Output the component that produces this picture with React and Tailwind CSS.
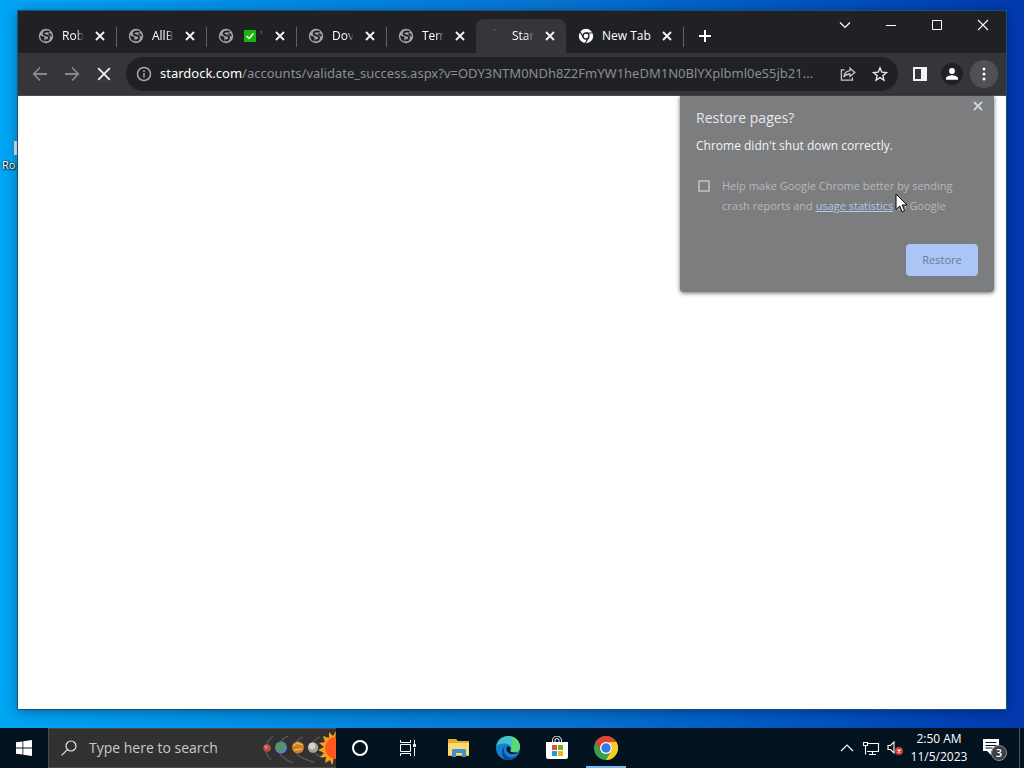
import { useState } from 'react';

const tabs = [
  { id: 1, title: 'Rob', icon: 'globe' },
  { id: 2, title: 'AllB', icon: 'globe' },
  { id: 3, title: "'", icon: 'globe', check: true },
  { id: 4, title: 'Dov', icon: 'globe' },
  { id: 5, title: 'Tem', icon: 'globe' },
  { id: 6, title: 'Star', icon: 'loading' },
  { id: 7, title: 'New Tab', icon: 'chrome' },
];

function Globe() {
  return (
    <svg viewBox="0 0 16 16" className="h-4 w-4 shrink-0">
      <circle cx="8" cy="8" r="7.2" fill="#a4a6a8" />
      <path d="M11.600 3.900C9.600 2.900 6.200 3.300 5.600 5C5.200 6.600 6.800 7.200 8.400 7.500C10.400 7.900 11.400 8.700 11 10.200C10.500 11.900 8.600 12.600 6.800 12.200" fill="none" stroke="#202124" strokeWidth="1.900" />
      <path d="M2.300 7.200C3.600 8.400 5.600 7.700 6.400 9.200C6.900 10.400 5.900 11.400 6.600 13.500C3.800 13 2 10.600 2.300 7.200Z" fill="#202124" />
      <path d="M10 5.600C11.400 5 12.600 5.400 13.400 6.400L13.700 8.400C12.400 8.600 11 7.600 10 5.600Z" fill="#202124" />
    </svg>
  );
}

function ChromeMono() {
  return (
    <svg viewBox="0 0 16 16" className="h-4 w-4 shrink-0" fill="none" stroke="#fff">
      <circle cx="8" cy="8" r="7.2" fill="#fff" stroke="none" />
      <circle cx="8" cy="8" r="3" stroke="#202124" strokeWidth="1.3" />
      <path d="M8 5h6.600M5.400 9.500 2.100 3.800M10.600 9.500 7.300 15.200" stroke="#202124" strokeWidth="1.200" />
    </svg>
  );
}

function CloseIcon({ className }) {
  return (
    <svg viewBox="0 0 16 16" className={className} fill="none" stroke="currentColor" strokeWidth="1.8">
      <path d="M4 4l8 8M12 4l-8 8" />
    </svg>
  );
}

function Tab({ tab, active, last, beforeActive, onSelect }) {
  return (
    <div className={`relative flex h-[34px] items-center gap-2 pr-2 pl-3 ${last ? 'w-[117px]' : 'w-[90px]'} ${active ? 'rounded-t-lg bg-[#35363a]' : ''}`}>
      {tab.icon === 'globe' && <Globe />}
      {tab.icon === 'chrome' && <ChromeMono />}
      {tab.icon === 'loading' && (
        <svg viewBox="0 0 16 16" className="h-4 w-4 shrink-0"><path d="M5 2h3" stroke="#4d5163" strokeWidth="1.5" /></svg>
      )}
      <button
        onClick={onSelect}
        className={`flex h-full min-w-0 flex-1 items-center text-left text-xs whitespace-nowrap text-white ${last ? '' : '[mask-image:linear-gradient(to_right,#000_65%,transparent)]'}`}
      >
        {tab.check && (
          <svg viewBox="0 0 12 12" className="mr-1 ml-0.5 h-3 w-3 shrink-0">
            <rect width="12" height="12" fill="#16b50f" />
            <path d="M2.500 6l2.500 2.500 4.500-5" fill="none" stroke="#fff" strokeWidth="1.400" />
          </svg>
        )}
        {tab.title}
      </button>
      <button aria-label="Close tab" className="text-gray-100"><CloseIcon className="h-4 w-4" /></button>
      {!active && !beforeActive && <span className="absolute top-2 -right-px h-5 w-px bg-[#5f6165]" />}
    </div>
  );
}

function TitleBar() {
  const [current, setCurrent] = useState(6);
  return (
    <div className="flex h-[42px] items-end bg-[#202124] pl-2">
      {tabs.map((tab) => (
        <Tab
          key={tab.id}
          tab={tab}
          active={tab.id === current}
          beforeActive={tab.id === current - 1 && current !== 6}
          last={tab.id === 7}
          onSelect={() => setCurrent(tab.id)}
        />
      ))}
      <button aria-label="New tab" className="flex h-[34px] w-11 items-center justify-center">
        <svg viewBox="0 0 14 14" className="h-3.5 w-3.5" stroke="#fff" strokeWidth="2"><path d="M7 1v12M1 7h12" /></svg>
      </button>
      <div className="ml-auto flex self-start">
        <button aria-label="Search tabs" className="flex h-7 w-[46px] items-center justify-center">
          <svg viewBox="0 0 12 12" className="h-3 w-3" fill="none" stroke="#fff" strokeWidth="1.200"><path d="M1 3.500l5 5 5-5" /></svg>
        </button>
        <button aria-label="Minimize" className="flex h-7 w-[46px] items-center justify-center">
          <svg viewBox="0 0 12 12" className="h-3 w-3" stroke="#fff"><path d="M1 6.500h10" /></svg>
        </button>
        <button aria-label="Maximize" className="flex h-7 w-[46px] items-center justify-center">
          <svg viewBox="0 0 12 12" className="h-3 w-3" fill="none" stroke="#fff"><path d="M1.500 1.500h9v9h-9z" /></svg>
        </button>
        <button aria-label="Close" className="flex h-7 w-[46px] items-center justify-center">
          <svg viewBox="0 0 12 12" className="h-3 w-3" stroke="#fff" strokeWidth="1.100"><path d="M1 1l10 10M11 1L1 11" /></svg>
        </button>
      </div>
    </div>
  );
}

function Toolbar() {
  return (
    <div className="flex h-[43px] items-center border-b border-[#4a4b4e] bg-[#35363a] px-1.5">
      <button aria-label="Back" className="flex h-8 w-8 items-center justify-center">
        <svg viewBox="0 0 16 16" className="h-4 w-4" fill="none" stroke="#87888b" strokeWidth="1.8"><path d="M15 8H2M8 1.500L1.800 8 8 14.500" /></svg>
      </button>
      <button aria-label="Forward" className="flex h-8 w-8 items-center justify-center">
        <svg viewBox="0 0 16 16" className="h-4 w-4" fill="none" stroke="#87888b" strokeWidth="1.8"><path d="M1 8h13M8 1.500L14.200 8 8 14.500" /></svg>
      </button>
      <button aria-label="Stop" className="flex h-8 w-8 items-center justify-center">
        <svg viewBox="0 0 16 16" className="h-4 w-4" stroke="#f1f1f2" strokeWidth="1.8"><path d="M2.200 2.200l11.600 11.600M13.800 2.200L2.200 13.800" /></svg>
      </button>
      <div className="mr-1.5 ml-1.5 flex h-[34px] min-w-0 flex-1 items-center rounded-full bg-[#202124] pr-0.5 pl-2.5">
        <svg viewBox="0 0 16 16" className="h-4 w-4 shrink-0" fill="none" stroke="#a5a8ac" strokeWidth="1.500">
          <circle cx="8" cy="8" r="6.500" /><path d="M8 7v4.500M8 4.300v1.600" />
        </svg>
        <p className="ml-2 min-w-0 flex-1 truncate font-['Noto_Sans',sans-serif] text-[13px] text-[#8b8e92]">
          <span className="text-white">stardock.com</span>/accounts/validate_success.aspx?v=ODY3NTM0NDh8Z2FmYW1heDM1N0BlYXplbml0eS5jb21...
        </p>
        <button aria-label="Share" className="flex h-8 w-8 shrink-0 items-center justify-center">
          <svg viewBox="0 0 16 16" className="h-4 w-4" fill="none" stroke="#c3c5c8" strokeWidth="1.300">
            <path d="M4.500 3.800H1.400v10.400h11v-2.600" /><path d="M10 2.200l4.800 4.200L10 10.400V8C7 8 5.200 9 3.800 11 4.200 7.600 6.400 5 10 4.600z" />
          </svg>
        </button>
        <button aria-label="Bookmark" className="flex h-8 w-8 shrink-0 items-center justify-center">
          <svg viewBox="0 0 16 16" className="h-4 w-4" fill="none" stroke="#e0e1e3" strokeWidth="1.400">
            <path d="M8 1.800l1.800 4.300 4.700.4-3.600 3.100 1.100 4.600L8 11.700l-4 2.500 1.100-4.600L1.500 6.500l4.700-.4z" />
          </svg>
        </button>
      </div>
      <button aria-label="Side panel" className="flex h-8 w-8 items-center justify-center">
        <svg viewBox="0 0 16 16" className="h-4 w-4"><path d="M1 1h14v14H1zM3 3v10h6V3z" fill="#f1f3f4" fillRule="evenodd" /></svg>
      </button>
      <button aria-label="Profile" className="flex h-8 w-8 items-center justify-center">
        <span className="flex h-[22px] w-[22px] items-center justify-center rounded-full bg-[#202124]">
          <svg viewBox="0 0 14 14" className="h-3.5 w-3.5" fill="#fff"><circle cx="7" cy="4" r="2.900" /><path d="M1 12.800v-1.600C1 9.200 5 8.200 7 8.200s6 1 6 3v1.600z" /></svg>
        </span>
      </button>
      <button aria-label="Menu" className="flex h-8 w-8 items-center justify-center">
        <span className="flex h-7 w-7 items-center justify-center rounded-full bg-[#505154]">
          <svg viewBox="0 0 14 14" className="h-3.5 w-3.5" fill="#fff"><circle cx="7" cy="2" r="1.500" /><circle cx="7" cy="7" r="1.500" /><circle cx="7" cy="12" r="1.500" /></svg>
        </span>
      </button>
    </div>
  );
}

function RestoreBubble() {
  return (
    <div className="absolute top-0 right-3 w-[314px] rounded-b bg-[#7c7d7f] px-4 pt-3 pb-4 shadow-[0_1px_4px_rgba(0,0,0,0.6)]">
      <button aria-label="Dismiss" className="absolute top-0.5 right-2 text-gray-300"><CloseIcon className="h-4 w-4" /></button>
      <h2 className="text-sm leading-5 text-gray-200">Restore pages?</h2>
      <p className="mt-2 text-xs leading-5 text-gray-100">Chrome didn't shut down correctly.</p>
      <div className="mt-5 flex pl-0.5">
        <input id="stats" type="checkbox" className="mt-1 h-3 w-3 shrink-0 appearance-none border-2 border-[#b0b2b4]" />
        <label htmlFor="stats" className="ml-3 text-[11px] leading-5 text-[#b8b9bb]">
          Help make Google Chrome better by sending<br />crash reports and{' '}
          <a href="#stats" className="text-[#b4c5ec] underline">usage statistics</a> to Google
        </label>
      </div>
      <div className="mt-7 flex justify-end">
        <button className="h-8 w-[72px] rounded bg-[#abc5f7] text-[11px] text-[#6b7a96]">Restore</button>
      </div>
    </div>
  );
}

function SearchArt() {
  return (
    <svg viewBox="0 0 74 38" className="h-[38px] w-[74px] shrink-0">
      <g fill="none" stroke="#77787a" strokeWidth="0.8">
        <path d="M11 7C2 14 2 25 9 31" /><path d="M26 7C12 14 12 26 31 34" /><path d="M41 8C26 15 28 27 52 33" /><path d="M58 8C46 13 46 24 62 29" />
      </g>
      <circle cx="5" cy="19" r="3.8" fill="#b95048" /><circle cx="4" cy="18" r="1.8" fill="#d77c6c" />
      <circle cx="19" cy="18.500" r="6" fill="#5a7fd6" />
      <path d="M15 16l4-3 2 2-2 2 3 2-2 4-3-2-3-1zM22 14l2 2-1 3-2-2z" fill="#4f9e3c" />
      <circle cx="36" cy="18.500" r="6" fill="#c97d27" /><path d="M31 17l4-3 6 2M32 21l8-1" stroke="#e7b45c" strokeWidth="1.500" fill="none" />
      <circle cx="51" cy="18.500" r="5.200" fill="#a7a29e" /><circle cx="50" cy="17" r="3.200" fill="#d8d5d2" />
      <path d="M74 2l-3 5-4-4v6l-6-2 2 6-6 1 5 4-6 3 6 3-4 4 6 0-1 6 5-3 2 5 1-2z" fill="#f5a01c" />
      <path d="M74 8a11 11 0 0 0 0 22z" fill="#ff5a1e" />
    </svg>
  );
}

function Taskbar() {
  return (
    <footer className="flex h-10 shrink-0 items-stretch bg-[#03121f] text-white">
      <button aria-label="Start" className="flex w-12 items-center justify-center">
        <svg viewBox="0 0 16 16" className="h-4 w-4" fill="#fff"><path d="M0 2.300L6.500 1.400v6.200H0zM7.300 1.300L16 0v7.600H7.300zM0 8.400h6.500v6.200L0 13.700zM7.300 8.400H16V16l-8.700-1.300z" /></svg>
      </button>
      <label className="flex w-72 items-center border border-r-0 border-[#4b4b4b] bg-[#323132] pl-3">
        <svg viewBox="0 0 16 16" className="h-4 w-4 shrink-0" fill="none" stroke="#e6e6e6" strokeWidth="1.200"><circle cx="10" cy="6" r="5" /><path d="M6.400 9.600L.6 15.400" /></svg>
        <input aria-label="Search" placeholder="Type here to search" className="ml-3 min-w-0 flex-1 bg-transparent text-sm outline-none placeholder:text-[#c9c9c9]" />
        <SearchArt />
      </label>
      <button aria-label="Cortana" className="flex w-12 items-center justify-center">
        <svg viewBox="0 0 18 18" className="h-[18px] w-[18px]" fill="none" stroke="#fff" strokeWidth="2"><circle cx="9" cy="9" r="7" /></svg>
      </button>
      <button aria-label="Task view" className="flex w-12 items-center justify-center">
        <svg viewBox="0 0 18 18" className="h-[18px] w-[18px]" fill="none" stroke="#fff"><path d="M1.500 1v2.500h10V1M1.500 5.500h10v7h-10zM1.500 17v-2.500h10V17M15.500 1v4M15.500 9v8" /><path d="M14.500 5.500h2v2h-2z" fill="#fff" /></svg>
      </button>
      <div className="ml-[3px] flex gap-px">
        <button aria-label="File Explorer" className="flex w-12 items-center justify-center">
          <svg viewBox="0 0 24 24" className="h-6 w-6">
            <path d="M1 3h8l2 2h11v15H1z" fill="#e8a92c" /><path d="M1 7h21v12H1z" fill="#fbd975" /><path d="M5 21v-7l1-1h12l1 1v7h-4v-4H9v4z" fill="#3c8fd0" />
          </svg>
        </button>
        <button aria-label="Edge" className="flex w-12 items-center justify-center">
          <svg viewBox="0 0 24 24" className="h-6 w-6">
            <circle cx="12" cy="12" r="12" fill="#1680d2" />
            <path d="M.3 10C1.500 3.500 6.500 0 12 0c7 0 12 5 12 10.500 0 4-3 6-6 6-2.500 0-4.500-1-3.500-2.500C16 11.500 14 8 9.500 7.500 5.500 7.200 2 8.500.3 10z" fill="#3fc1cf" />
            <path d="M14 .2C20 1 24 5.500 24 10.500c0 4-3 6-6 6-2.500 0-4.500-1-3.500-2.500C16.500 11 18 4 14 .2z" fill="#5bd873" />
            <path d="M9.500 9.500C6 13 8 20 14 21.500c3.500.6 6.500-1 8.500-3.500-3 5-8 6.500-12.500 5.900C5 22 4 13 9.500 9.500z" fill="#0c4a94" />
            <path d="M12 10c-2.500 2-2 6 2 7.500 3 1 6 .5 8.500-1-2 .3-3 0-4.500 0-2.500 0-4.500-1-3.500-2.500.8-1.600-.5-3.500-2.500-4z" fill="#03121f" />
          </svg>
        </button>
        <button aria-label="Store" className="flex w-12 items-center justify-center">
          <svg viewBox="0 0 24 24" className="h-6 w-6">
            <path d="M7.500 7V4.500a4.500 4.500 0 0 1 9 0V7M10 7V4.500a2 2 0 0 1 4 0V7" fill="none" stroke="#fff" />
            <path d="M1 6h22v15a2 2 0 0 1-2 2H3a2 2 0 0 1-2-2z" fill="#fff" />
            <path d="M7 9h5v5H7z" fill="#e8502b" /><path d="M13 9h5v5h-5z" fill="#74b21d" /><path d="M7 15h5v5H7z" fill="#199edb" /><path d="M13 15h5v5h-5z" fill="#f5b516" />
          </svg>
        </button>
        <button aria-label="Chrome" className="flex w-12 flex-col items-center justify-between pt-2">
          <svg viewBox="0 0 24 24" className="h-6 w-6">
            <circle cx="12" cy="12" r="12" fill="#30a350" />
            <path d="M1.600 6A12 12 0 0 1 22.400 6H12a6 6 0 0 0-5.200 9z" fill="#e34133" />
            <path d="M22.400 6A12 12 0 0 1 12 24l5.200-9A6 6 0 0 0 12 6z" fill="#fccb1f" />
            <circle cx="12" cy="12" r="6" fill="#fff" /><circle cx="12" cy="12" r="4.700" fill="#3b78e7" />
          </svg>
          <span className="h-0.5 w-10 bg-[#76b9ed]" />
        </button>
      </div>
      <div className="ml-auto flex items-center">
        <button aria-label="Show hidden icons" className="flex w-6 justify-center">
          <svg viewBox="0 0 14 14" className="h-3.5 w-3.5" fill="none" stroke="#fff" strokeWidth="1.200"><path d="M1 10l6-6 6 6" /></svg>
        </button>
        <button aria-label="Network" className="flex w-6 justify-center">
          <svg viewBox="0 0 18 16" className="h-4 w-[18px]" fill="none" stroke="#fff" strokeWidth="1.100"><path d="M5 3.500h11.500v8H5M10.500 11.500v3M7 14.500h7M1.500 2.500h4v3h-4zM3.500 5.500v9" /></svg>
        </button>
        <button aria-label="Volume" className="flex w-6 justify-center">
          <svg viewBox="0 0 16 16" className="h-4 w-4" fill="none" stroke="#fff" strokeWidth="1.100">
            <path d="M1 5.500h2.500L7 2v11L3.500 9.500H1z" /><circle cx="12" cy="11" r="4" fill="#d33a35" stroke="none" /><path d="M10.500 9.500l3 3M13.500 9.500l-3 3" />
          </svg>
        </button>
        <div className="w-16 text-center text-xs leading-[18px]">
          <p>2:50 AM</p>
          <p>11/5/2023</p>
        </div>
        <button aria-label="Notifications" className="relative mx-1 flex w-10 items-center justify-center">
          <svg viewBox="0 0 26 26" className="h-[26px] w-[26px]">
            <path d="M1 4h16v12H9v4l-4-4H1z" fill="#fff" /><path d="M3.500 7.500h11M3.500 10.500h11M3.500 13h7" stroke="#03121f" />
            <circle cx="17" cy="18" r="7.500" fill="#3b3f45" stroke="#8c8f93" />
          </svg>
          <span className="absolute top-2.5 left-4 w-4 text-center text-[11px] leading-4 font-semibold">3</span>
        </button>
        <span className="mr-1 h-10 w-px bg-[#4a5260]" />
      </div>
    </footer>
  );
}

export default function App() {
  return (
    <div className="flex h-screen flex-col overflow-hidden font-['Open_Sans',sans-serif]">
      <main className="relative flex min-h-0 flex-1 bg-linear-to-r from-[#00a5f4] via-[#0873d2] via-55% to-[#0238b0] px-[18px] pt-[11px] pb-[19px]">
        <div className="absolute top-[141px] left-0.5 flex flex-col text-[11px] text-white">
          <span className="ml-3 h-3.5 w-4 bg-gray-200" />
          <span className="leading-5 [text-shadow:1px_1px_2px_#000,0_0_2px_#000]">Ro</span>
        </div>
        <section className="relative flex min-w-0 flex-1 flex-col bg-white shadow-[0_0_0_1px_#1c4f78,0_2px_12px_rgba(0,0,0,0.4)]">
          <TitleBar />
          <Toolbar />
          <div className="relative flex-1">
            <RestoreBubble />
          </div>
        </section>
        <svg viewBox="0 0 13 20" className="absolute top-[193px] left-[895px] h-5 w-[13px]">
          <path d="M1 1v15.500l3.700-3.500 2.400 5.700 2.500-1.100-2.400-5.600H12z" fill="#fff" stroke="#000" />
        </svg>
      </main>
      <Taskbar />
    </div>
  );
}
